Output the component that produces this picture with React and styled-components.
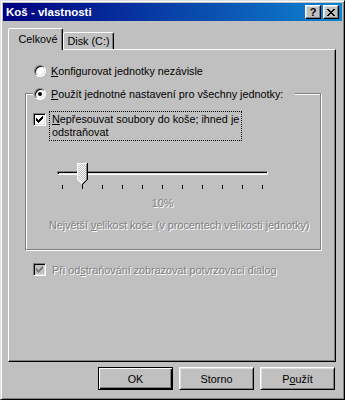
import React from 'react';
import styled, { createGlobalStyle } from 'styled-components';

const GlobalStyle = createGlobalStyle`
  html, body { margin: 0; padding: 0; background: #c0c0c0; }
  body { font-family: "Liberation Sans", Arial, sans-serif; font-size: 10.8px; color: #000; }
  * { box-sizing: border-box; }
`;

const Window = styled.div`
  width: 345px;
  height: 400px;
  background: #c0c0c0;
  border: 1px solid;
  border-color: #dfdfdf #000 #000 #dfdfdf;
  box-shadow: inset 1px 1px #fff, inset -1px -1px #808080;
  padding: 2px;
  display: flex;
  flex-direction: column;
`;

const TitleBar = styled.div`
  height: 18px;
  flex: none;
  display: flex;
  align-items: center;
  padding: 0 3px 0 3px;
  background: linear-gradient(to right, #000080, #1084d0);
  color: #fff;
  font-weight: bold;
  font-size: 11.5px;
`;

const TitleText = styled.div`
  flex: 1;
  white-space: nowrap;
`;

const TitleButton = styled.div`
  width: 16px;
  height: 14px;
  margin-left: ${(p) => (p.$gap ? '2px' : '0')};
  background: #c0c0c0;
  border: 1px solid;
  border-color: #fff #000 #000 #fff;
  box-shadow: inset -1px -1px #808080, inset 1px 1px #dfdfdf;
  display: flex;
  align-items: center;
  justify-content: center;
  color: #000;
  font-weight: bold;
  font-size: 11px;
  line-height: 1;
`;

const Body = styled.div`
  flex: 1;
  display: flex;
  flex-direction: column;
  padding: 7px 6px 0 5px;
`;

const TabStrip = styled.div`
  display: flex;
  align-items: flex-end;
  height: 22px;
  margin-bottom: -1px;
  position: relative;
  z-index: 1;
`;

const Tab = styled.div`
  height: ${(p) => (p.$active ? '22px' : '17px')};
  width: ${(p) => p.$w}px;
  margin-bottom: ${(p) => (p.$active ? '0' : '1px')};
  display: flex;
  align-items: center;
  justify-content: center;
  padding: ${(p) => (p.$active ? '0 0 1px 5px' : '0 0 0 0')};
  background: #c0c0c0;
  border: 1px solid;
  border-bottom: none;
  border-color: #fff #000 transparent #fff;
  border-radius: 2px 2px 0 0;
  box-shadow: inset -1px 0 #808080;
  white-space: nowrap;
`;

const Panel = styled.div`
  height: 313px;
  flex: none;
  border: 1px solid;
  border-color: #fff #000 #000 #fff;
  box-shadow: inset -1px -1px #808080;
  padding: 14px 0 0 16px;
  display: flex;
  flex-direction: column;
  align-items: flex-start;
`;

const OptionRow = styled.div`
  display: flex;
  align-items: center;
  height: 13px;
  margin-left: ${(p) => p.$ml || 0}px;
  margin-top: ${(p) => p.$mt || 0}px;
  white-space: nowrap;
`;

const RadioCircle = styled.span`
  width: 12px;
  height: 12px;
  flex: none;
  margin-right: 5px;
  border-radius: 50%;
  background: #fff;
  border: 1px solid;
  border-color: #808080 #fff #fff #808080;
  box-shadow: inset 1px 1px #000, inset -1px -1px #dfdfdf;
  display: flex;
  align-items: center;
  justify-content: center;
  &::after {
    content: '';
    width: 4px;
    height: 4px;
    border-radius: 50%;
    background: #000;
    display: ${(p) => (p.$checked ? 'block' : 'none')};
  }
`;

const Group = styled.fieldset`
  margin: 10px 0 0 0;
  width: 296px;
  min-inline-size: 0;
  padding: 11px 0 17px 7px;
  border: 1px solid #808080;
  box-shadow: inset 1px 1px #fff, 1px 1px #fff;
  display: flex;
  flex-direction: column;
  align-items: flex-start;
`;

const GroupLegend = styled.legend`
  padding: 0 12px 0 1px;
  margin: 0;
  height: 13px;
  background: #c0c0c0;
`;

const LegendInner = styled.span`
  display: flex;
  align-items: center;
  height: 13px;
  white-space: nowrap;
`;

const CheckRow = styled.div`
  display: flex;
  align-items: flex-start;
  margin-left: ${(p) => p.$ml || 0}px;
  margin-top: ${(p) => p.$mt || 0}px;
`;

const CheckBox = styled.span`
  width: 13px;
  height: 13px;
  flex: none;
  margin-top: ${(p) => p.$mt || 0}px;
  margin-right: 3px;
  background: ${(p) => (p.$disabled ? '#c0c0c0' : '#fff')};
  border: 1px solid;
  border-color: #808080 #fff #fff #808080;
  box-shadow: inset 1px 1px #000, inset -1px -1px #dfdfdf;
  display: flex;
  align-items: center;
  justify-content: center;
`;

const CheckLabel = styled.span`
  display: inline-block;
  line-height: 13px;
  padding: ${(p) => (p.$focus ? '1px 2px 1px 2px' : '0 2px')};
  border: 1px ${(p) => (p.$focus ? 'dotted #000' : 'solid transparent')};
  white-space: nowrap;
  color: ${(p) => (p.$disabled ? '#808080' : '#000')};
  text-shadow: ${(p) => (p.$disabled ? '1px 1px 0 #fff' : 'none')};
`;

const U = styled.span`
  text-decoration: underline;
  text-underline-offset: 1px;
`;

const SliderArea = styled.div`
  width: 211px;
  margin: 22px 0 0 24px;
  display: flex;
  flex-direction: column;
`;

const SliderBox = styled.div`
  position: relative;
  height: 26px;
`;

const Track = styled.div`
  height: 4px;
  margin-top: 8px;
  border-top: 1px solid #808080;
  border-left: 1px solid #808080;
  border-bottom: 1px solid #fff;
  border-right: 1px solid #fff;
  background: #dfdfdf;
  box-shadow: inset 1px 1px #000;
`;

const Thumb = styled.div`
  position: absolute;
  top: 0;
  width: 11px;
  height: 22px;
  line-height: 0;
`;

const Ticks = styled.div`
  display: flex;
  justify-content: space-between;
  padding: 0 5px;
  margin-top: 10px;
`;

const Tick = styled.span`
  width: 1px;
  height: 4px;
  background: #000;
`;

const DisabledText = styled.div`
  color: #808080;
  text-shadow: 1px 1px 0 #fff;
  line-height: 13px;
  white-space: nowrap;
  margin-top: ${(p) => p.$mt || 0}px;
  margin-left: ${(p) => p.$ml || 0}px;
  text-align: ${(p) => p.$align || 'left'};
`;

const ButtonRow = styled.div`
  display: flex;
  justify-content: flex-end;
  gap: 6px;
  margin-top: 5px;
  padding-right: 1px;
`;

const Btn = styled.button`
  width: 75px;
  height: 23px;
  font: inherit;
  color: #000;
  background: #c0c0c0;
  padding: 0;
  border: 1px solid;
  border-color: ${(p) => (p.$default ? '#000' : '#fff #000 #000 #fff')};
  box-shadow: ${(p) =>
    p.$default
      ? 'inset 1px 1px #fff, inset -1px -1px #000, inset -2px -2px #808080'
      : 'inset 1px 1px #dfdfdf, inset -1px -1px #808080'};
`;

const closeRows = ['11....11', '.11..11.', '..1111..', '...11...', '..1111..', '.11..11.', '11....11'];
const checkRows = ['......1', '.....11', '1...111', '11.111.', '11111..', '.111...', '..1....'];

function PixelIcon({ rows, color, scale = 1 }) {
  const w = rows[0].length;
  const h = rows.length;
  const rects = [];
  rows.forEach((r, y) =>
    r.split('').forEach((c, x) => {
      if (c === '1') rects.push(<rect key={`${x}-${y}`} x={x} y={y} width="1" height="1" fill={color} />);
    })
  );
  return (
    <svg width={w * scale} height={h * scale} viewBox={`0 0 ${w} ${h}`} shapeRendering="crispEdges">
      {rects}
    </svg>
  );
}

function ThumbIcon() {
  const rects = [];
  const put = (x, y, c) => rects.push(<rect key={`${x}-${y}-${rects.length}`} x={x} y={y} width="1" height="1" fill={c} />);
  for (let y = 0; y < 22; y++) {
    let l = 0;
    let r = 10;
    if (y > 16) {
      const k = y - 16;
      l = k;
      r = 10 - k;
    }
    for (let x = l; x <= r; x++) {
      let c = (x + y) % 2 === 0 ? '#fff' : '#c0c0c0';
      if (y === 0) c = x === 10 ? '#000' : '#fff';
      else if (x === l && l !== r) c = '#fff';
      else if (x === r) c = '#000';
      else if (x === r - 1) c = '#808080';
      else if (y === 1 || x === l + 1) c = '#dfdfdf';
      put(x, y, c);
    }
  }
  return (
    <svg width="11" height="22" viewBox="0 0 11 22" shapeRendering="crispEdges">
      {rects}
    </svg>
  );
}

const sliderValue = 10;
const TRACK_INSET = 5;
const TRACK_RANGE = 200;

export default function App() {
  const thumbLeft = TRACK_INSET + (sliderValue / 100) * TRACK_RANGE - 5;
  return (
    <>
      <GlobalStyle />
      <Window>
        <TitleBar>
          <TitleText>Koš - vlastnosti</TitleText>
          <TitleButton>?</TitleButton>
          <TitleButton $gap>
            <PixelIcon rows={closeRows} color="#000" />
          </TitleButton>
        </TitleBar>
        <Body>
          <TabStrip>
            <Tab $active $w={55}>Celkové</Tab>
            <Tab $w={51}>Disk (C:)</Tab>
          </TabStrip>
          <Panel>
            <OptionRow $ml={9}>
              <RadioCircle />
              <span>
                <U>K</U>onfigurovat jednotky nezávisle
              </span>
            </OptionRow>
            <Group>
              <GroupLegend>
                <LegendInner>
                  <RadioCircle $checked />
                  <span>
                    <U>P</U>oužít jednotné nastavení pro všechny jednotky:
                  </span>
                </LegendInner>
              </GroupLegend>
              <CheckRow>
                <CheckBox $mt={2}>
                  <PixelIcon rows={checkRows} color="#000" />
                </CheckBox>
                <CheckLabel $focus>
                  <U>N</U>epřesouvat soubory do koše; ihned je
                  <br />
                  odstraňovat
                </CheckLabel>
              </CheckRow>
              <SliderArea>
                <SliderBox>
                  <Track />
                  <Thumb style={{ left: thumbLeft }}>
                    <ThumbIcon />
                  </Thumb>
                  <Ticks>
                    {Array.from({ length: 11 }).map((_, i) => (
                      <Tick key={i} />
                    ))}
                  </Ticks>
                </SliderBox>
                <DisabledText $mt={8} $align="center">
                  10%
                </DisabledText>
              </SliderArea>
              <DisabledText $mt={9} $ml={16}>
                Největší <U>v</U>elikost koše (v procentech velikosti jednotky)
              </DisabledText>
            </Group>
            <CheckRow $ml={8} $mt={13}>
              <CheckBox $disabled>
                <PixelIcon rows={checkRows} color="#808080" />
              </CheckBox>
              <CheckLabel $disabled>
                Při od<U>s</U>traňování zobrazovat potvrzovací dialog
              </CheckLabel>
            </CheckRow>
          </Panel>
          <ButtonRow>
            <Btn $default>OK</Btn>
            <Btn>Storno</Btn>
            <Btn>
              P<U>o</U>užít
            </Btn>
          </ButtonRow>
        </Body>
      </Window>
    </>
  );
}
